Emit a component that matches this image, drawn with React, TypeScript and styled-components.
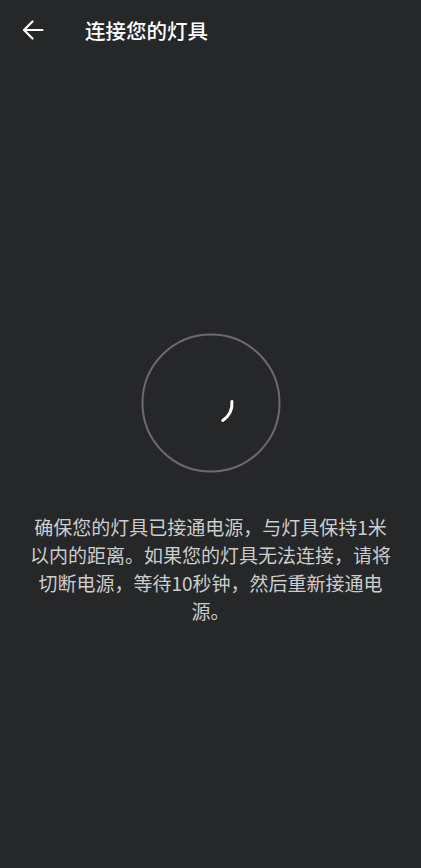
import styled, { createGlobalStyle } from "styled-components";

const GlobalStyle = createGlobalStyle`
  html, body {
    margin: 0;
    padding: 0;
    background: #262729;
  }
  body {
    font-family: "Noto Sans CJK SC", "Noto Sans", sans-serif;
  }
`;

const Page = styled.div`
  width: 421px;
  height: 868px;
  background: #262729;
  display: flex;
  flex-direction: column;
  align-items: center;
`;

const Header = styled.div`
  width: 100%;
  height: 60px;
  display: flex;
  align-items: center;
  box-sizing: border-box;
  padding-left: 22px;
`;

const BackButton = styled.button`
  width: 22px;
  height: 22px;
  padding: 0;
  border: none;
  background: none;
  display: flex;
  align-items: center;
  justify-content: center;
  cursor: pointer;
`;

const Title = styled.h1`
  margin: 0 0 0 41px;
  font-size: 20.5px;
  font-weight: 500;
  color: #ffffff;
  line-height: 1;
`;

const Spinner = styled.div`
  margin-top: 273px;
  width: 140px;
  height: 140px;
`;

const Message = styled.p`
  width: 362px;
  margin: 40px 0 0;
  font-size: 19px;
  line-height: 28px;
  color: #cdcdcd;
  text-align: center;
`;

const BackArrow = () => (
  <svg width="22" height="22" viewBox="0 0 22 22" fill="none">
    <path
      d="M20.5 11 H2.5 M10.5 2.5 L2 11 L10.5 19.5"
      stroke="#ffffff"
      strokeWidth="2.2"
      strokeLinecap="round"
      strokeLinejoin="round"
    />
  </svg>
);

const arcPoint = (r: number, deg: number) => {
  const a = (deg * Math.PI) / 180;
  return `${70 + r * Math.cos(a)} ${70 + r * Math.sin(a)}`;
};

const Loader = () => (
  <svg width="140" height="140" viewBox="0 0 140 140">
    <circle cx="70" cy="70" r="68.5" fill="none" stroke="#6b6b6d" strokeWidth="2" />
    <path
      d={`M${arcPoint(21, -4)} A21 21 0 0 1 ${arcPoint(21, 56)}`}
      fill="none"
      stroke="#ffffff"
      strokeWidth="3"
      strokeLinecap="round"
    />
  </svg>
);

export default function App() {
  return (
    <>
      <GlobalStyle />
      <Page>
        <Header>
          <BackButton aria-label="返回">
            <BackArrow />
          </BackButton>
          <Title>连接您的灯具</Title>
        </Header>
        <Spinner>
          <Loader />
        </Spinner>
        <Message>
          确保您的灯具已接通电源，与灯具保持1米以内的距离。如果您的灯具无法连接，请将切断电源，等待10秒钟，然后重新接通电源。
        </Message>
      </Page>
    </>
  );
}
